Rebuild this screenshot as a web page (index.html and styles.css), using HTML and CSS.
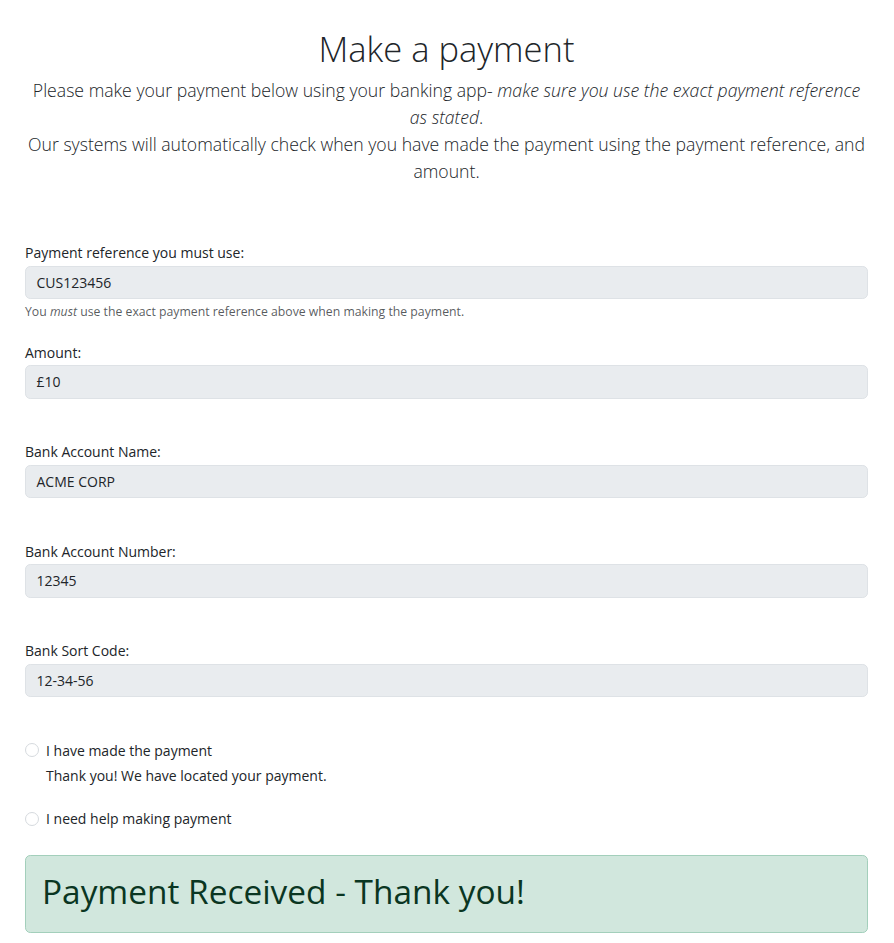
FILE: index.html
```html
<!DOCTYPE html>
<html lang="en">
<head>
<meta charset="utf-8">
<title>Make a payment</title>
<link rel="stylesheet" href="styles.css">
</head>
<body>
<main class="page">
  <header class="intro">
    <h1 class="title">Make a payment</h1>
    <p class="lead">Please make your payment below using your banking app- <em>make sure you use the exact payment reference</em> <em>as stated</em>.<br>Our systems will automatically check when you have made the payment using the payment reference, and amount.</p>
  </header>

  <form class="payment-form">
    <div class="group">
      <label class="label">Payment reference you must use:</label>
      <div class="field">CUS123456</div>
      <div class="help">You <em>must</em> use the exact payment reference above when making the payment.</div>
    </div>
    <div class="group">
      <label class="label">Amount:</label>
      <div class="field">£10</div>
      <div class="help"></div>
    </div>
    <div class="group">
      <label class="label">Bank Account Name:</label>
      <div class="field">ACME CORP</div>
      <div class="help"></div>
    </div>
    <div class="group">
      <label class="label">Bank Account Number:</label>
      <div class="field">12345</div>
      <div class="help"></div>
    </div>
    <div class="group">
      <label class="label">Bank Sort Code:</label>
      <div class="field">12-34-56</div>
      <div class="help"></div>
    </div>

    <div class="check">
      <span class="radio"></span>
      <span class="check-label">I have made the payment</span>
    </div>
    <p class="check-note">Thank you! We have located your payment.</p>

    <div class="check check-help">
      <span class="radio"></span>
      <span class="check-label">I need help making payment</span>
    </div>
  </form>

  <div class="alert">
    <h1 class="alert-heading">Payment Received - Thank you!</h1>
  </div>
</main>
</body>
</html>
```

FILE: styles.css
```css
* { box-sizing: border-box; }

html { font-size: 14px; }

body {
  margin: 0;
  background: #ffffff;
  color: #212529;
  font-family: "Open Sans", "Noto Sans", sans-serif;
  font-size: 14px;
  line-height: 1.5;
}

.page {
  padding: 29px 26px 0 25px;
}

.intro {
  text-align: center;
}

.title {
  margin: 0 0 9px;
  font-size: 34.5px;
  font-weight: 300;
  line-height: 39.2px;
}

.lead {
  margin: 0 0 57px;
  font-size: 17.65px;
  line-height: 27px;
  font-weight: 300;
}

.payment-form {
  margin: 0;
}

.group {
  margin-bottom: 21px;
}

.label {
  display: block;
  line-height: 21px;
  margin-bottom: 2.5px;
}

.field {
  height: 33.5px;
  padding: 5.25px 10.5px;
  line-height: 21px;
  background: #e9ecef;
  border: 1px solid #dee2e6;
  border-radius: 5.25px;
}

.help {
  margin-top: 3.5px;
  min-height: 18px;
  font-size: 12.25px;
  line-height: 18px;
  color: rgba(33, 37, 41, 0.75);
}

.check {
  display: flex;
  align-items: center;
  gap: 7px;
  line-height: 21px;
}

.radio {
  width: 14px;
  height: 14px;
  flex: none;
  border: 1px solid #d6dade;
  border-radius: 50%;
  background: #fff;
}

.check-note {
  margin: 4.5px 0 0 21px;
  line-height: 21px;
}

.check-help {
  margin-top: 22px;
}

.alert {
  margin-top: 25.5px;
  padding: 16px 16px 14px;
  background: #d1e7dd;
  border: 1px solid #a3cfbb;
  border-radius: 5.25px;
  color: #0a3622;
}

.alert-heading {
  margin: 0 0 7px;
  font-size: 33.4px;
  font-weight: 400;
  line-height: 39.2px;
}
```
